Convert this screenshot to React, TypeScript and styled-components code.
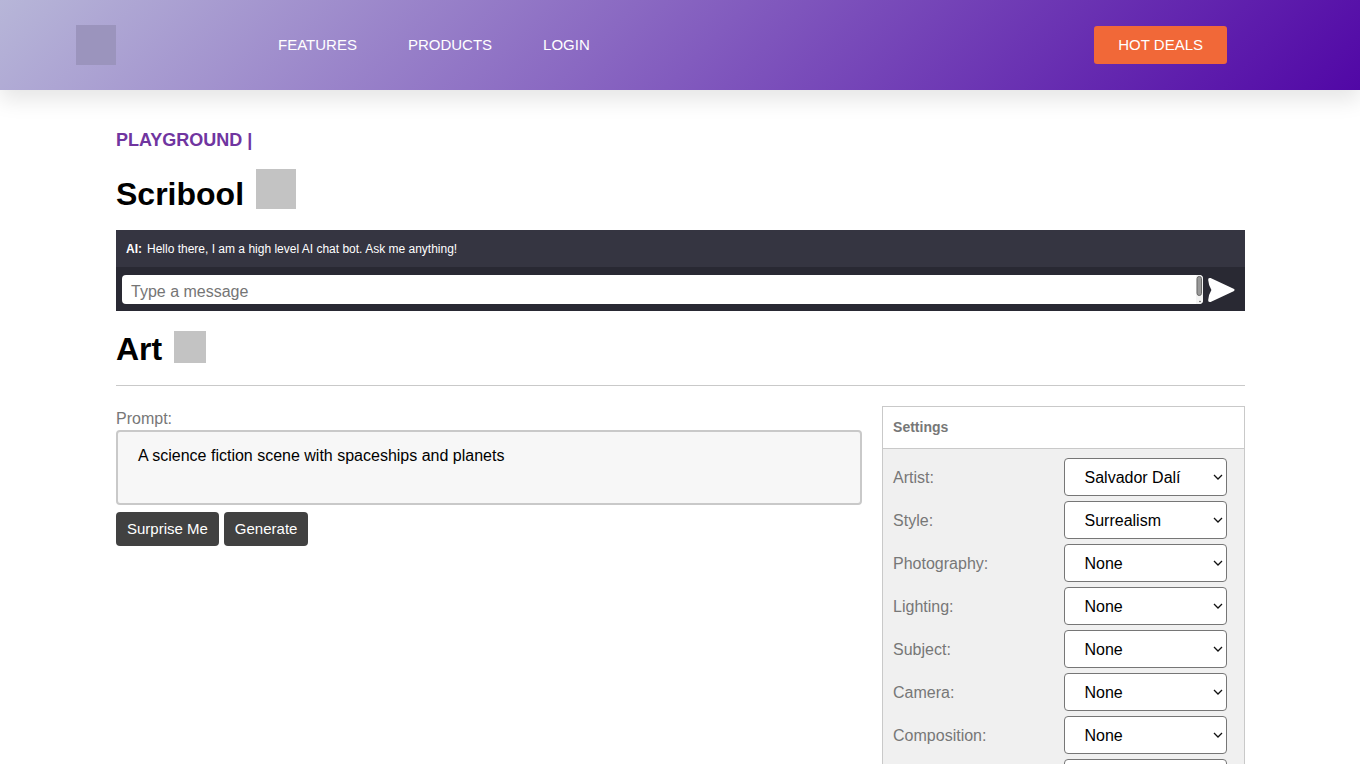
import React from "react";
import styled, { createGlobalStyle } from "styled-components";

const GlobalStyle = createGlobalStyle`
  *, *::before, *::after { box-sizing: border-box; }
  body {
    margin: 0;
    background: #fff;
    color: #000;
    font: 16px/20px "Liberation Sans", Arial, sans-serif;
  }
  button, select, textarea { font-family: inherit; }
`;

const Header = styled.header`
  display: flex;
  align-items: center;
  padding: 25px 133px 25px 76px;
  background: linear-gradient(135deg, #b7b6d8 0%, #5107a6 100%);
  box-shadow: 0 10px 20px rgba(0, 0, 0, 0.1);
`;

const Logo = styled.a`
  display: block;
  width: 40px;
  height: 40px;
  background: #9b94bd;
`;

const Nav = styled.nav`
  display: flex;
  flex: 1;
  gap: 51px;
  margin-left: 162px;
`;

const NavLink = styled.a`
  color: #fff;
  font-size: 15px;
  text-decoration: none;
`;

const DealsButton = styled.button`
  padding: 10px 24px;
  border: 0;
  border-radius: 3px;
  background: #f16838;
  color: #fff;
  font-size: 15px;
  line-height: 18px;
`;

const Main = styled.main`
  padding: 40px 115px 40px 116px;
`;

const Eyebrow = styled.p`
  margin: 0 0 19px;
  color: #7035a0;
  font-size: 18px;
  font-weight: 700;
`;

const Heading = styled.h1`
  display: flex;
  align-items: flex-start;
  gap: 12px;
  margin: 0;
  font-size: 32px;
  line-height: 36px;
`;

const HeadingText = styled.span`
  padding-top: 7px;
`;

const ArtHeading = styled(Heading)`
  margin-top: 20px;
  padding-bottom: 18px;
  border-bottom: 1px solid #c9c9c9;

  ${HeadingText} {
    padding-top: 0;
  }
`;

const Placeholder = styled.span<{ $size: number }>`
  width: ${(p) => p.$size}px;
  height: ${(p) => p.$size}px;
  background: #c3c3c3;
`;

const Chat = styled.section`
  margin-top: 18px;
  background: #292933;
`;

const Message = styled.p`
  display: flex;
  gap: 5px;
  margin: 0;
  padding: 9px 10px 8px;
  background: #353541;
  color: #fff;
  font-size: 12px;
`;

const Composer = styled.form`
  display: flex;
  align-items: center;
  gap: 4px;
  padding: 8px 8px 7px 6px;
`;

const MessageBox = styled.div`
  position: relative;
  flex: 1;
  display: flex;
`;

const MessageInput = styled.textarea`
  flex: 1;
  height: 29px;
  padding: 7px 9px 2px;
  border: 0;
  border-radius: 4px;
  background: #fff;
  font-size: 16px;
  line-height: 20px;
  resize: none;
  overflow: hidden;

  &::placeholder { color: #757575; }
`;

const ScrollThumb = styled.svg`
  position: absolute;
  top: 0;
  right: 0;
`;

const SendButton = styled.button`
  display: flex;
  padding: 0;
  border: 0;
  background: none;
`;

const Workspace = styled.div`
  display: grid;
  grid-template-columns: minmax(0, 37fr) minmax(0, 18fr);
  gap: 20px;
  align-items: start;
  margin-top: 20px;
`;

const PromptColumn = styled.section`
  display: flex;
  flex-direction: column;
  padding-top: 3px;
`;

const PromptLabel = styled.label`
  color: #777;
`;

const PromptInput = styled.textarea`
  height: 75px;
  margin-top: 1px;
  padding: 14px 20px;
  border: 2px solid #c9c9c9;
  border-radius: 4px;
  background: #f7f7f7;
  color: #000;
  font-size: 16px;
  line-height: 20px;
  resize: none;
`;

const Actions = styled.div`
  display: flex;
  gap: 5px;
  margin-top: 7px;
`;

const ActionButton = styled.button`
  padding: 7px 11px;
  border: 0;
  border-radius: 4px;
  background: #414141;
  color: #fff;
  font-size: 15px;
  line-height: 20px;
`;

const Panel = styled.section`
  border: 1px solid #c9c9c9;
  background: #f0f0f0;
  color: #777;
`;

const PanelTitle = styled.h2`
  margin: 0;
  padding: 10px 10px 11px;
  border-bottom: 1px solid #c9c9c9;
  background: #fff;
  font-size: 14px;
  line-height: 20px;
`;

const PanelBody = styled.div`
  display: flex;
  flex-direction: column;
  gap: 5px;
  padding: 9px 10px;
`;

const Setting = styled.div`
  display: grid;
  grid-template-columns: 1fr 1fr;
  align-items: center;
`;

const SettingLabel = styled.label`
  padding-top: 2px;
`;

const SelectBox = styled.div`
  position: relative;
  width: 96%;
`;

const Select = styled.select`
  appearance: none;
  display: block;
  width: 100%;
  height: 38px;
  padding: 0 20px;
  border: 1px solid #767676;
  border-radius: 4px;
  background: #fff;
  color: #000;
  font-size: 16px;
`;

const Chevron = styled.svg`
  position: absolute;
  top: 16px;
  right: 4px;
  pointer-events: none;
`;

const links = ["FEATURES", "PRODUCTS", "LOGIN"];

const settings = [
  { name: "Artist", value: "Salvador Dalí" },
  { name: "Style", value: "Surrealism" },
  { name: "Photography", value: "None" },
  { name: "Lighting", value: "None" },
  { name: "Subject", value: "None" },
  { name: "Camera", value: "None" },
  { name: "Composition", value: "None" },
];

function Dropdown({ id, value, label }: { id: string; value: string; label?: string }) {
  return (
    <SelectBox>
      <Select id={id} defaultValue={value} aria-label={label}>
        <option>{value}</option>
      </Select>
      <Chevron width="10" height="7" viewBox="0 0 10 7" aria-hidden="true">
        <path d="M1 1 5 5 9 1" fill="none" stroke="#111" strokeWidth="1.3" />
      </Chevron>
    </SelectBox>
  );
}

export default function App() {
  return (
    <>
      <GlobalStyle />
      <Header>
        <Logo href="#" aria-label="Home" />
        <Nav>
          {links.map((link) => (
            <NavLink key={link} href="#">{link}</NavLink>
          ))}
        </Nav>
        <DealsButton type="button">HOT DEALS</DealsButton>
      </Header>
      <Main>
        <Eyebrow>PLAYGROUND |</Eyebrow>
        <Heading>
          <HeadingText>Scribool</HeadingText>
          <Placeholder $size={40} />
        </Heading>
        <Chat>
          <Message>
            <strong>AI:</strong>
            <span>Hello there, I am a high level AI chat bot. Ask me anything!</span>
          </Message>
          <Composer onSubmit={(e) => e.preventDefault()}>
            <MessageBox>
              <MessageInput rows={1} placeholder="Type a message" aria-label="Message" />
              <ScrollThumb width="7" height="29" viewBox="0 0 7 29" aria-hidden="true">
                <path d="M0 0H3Q7 0 7 4V25Q7 29 3 29H0Z" fill="#f4f4f4" />
                <rect x="1" y="1.5" width="4.5" height="19" rx="2.2" fill="#999" stroke="#666" />
                <circle cx="4" cy="26.5" r="0.8" fill="#555" />
              </ScrollThumb>
            </MessageBox>
            <SendButton type="submit" aria-label="Send">
              <svg width="30" height="26" viewBox="0 0 30 26" aria-hidden="true">
                <path
                  d="M3.6 1 26.6 11.8Q28.6 13 26.6 14.2L3.6 25Q.8 25.6 1.2 23 1.6 17.5 4.4 13 1.6 8.5 1.2 3 .8 .4 3.6 1Z"
                  fill="#fff"
                />
              </svg>
            </SendButton>
          </Composer>
        </Chat>
        <ArtHeading as="h2">
          <HeadingText>Art</HeadingText>
          <Placeholder $size={32} />
        </ArtHeading>
        <Workspace>
          <PromptColumn>
            <PromptLabel htmlFor="prompt">Prompt:</PromptLabel>
            <PromptInput
              id="prompt"
              defaultValue="A science fiction scene with spaceships and planets"
            />
            <Actions>
              <ActionButton type="button">Surprise Me</ActionButton>
              <ActionButton type="button">Generate</ActionButton>
            </Actions>
          </PromptColumn>
          <Panel>
            <PanelTitle>Settings</PanelTitle>
            <PanelBody>
              {settings.map(({ name, value }) => (
                <Setting key={name}>
                  <SettingLabel htmlFor={name}>{name}:</SettingLabel>
                  <Dropdown id={name} value={value} />
                </Setting>
              ))}
              <Setting>
                <span />
                <Dropdown id="extra" value="" label="Additional setting" />
              </Setting>
            </PanelBody>
          </Panel>
        </Workspace>
      </Main>
    </>
  );
}
